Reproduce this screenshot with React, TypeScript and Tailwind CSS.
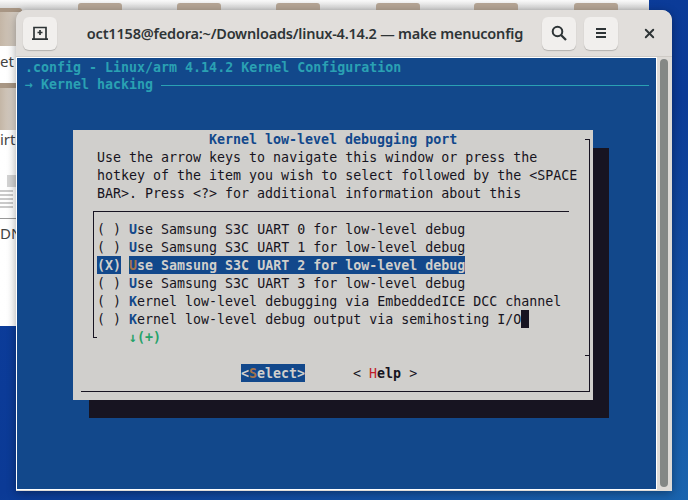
import type { ReactNode } from 'react';
import { X } from 'lucide-react';

const Row = ({ children, className = '' }: { children?: ReactNode; className?: string }) => (
  <div className={`h-[18px] whitespace-pre ${className}`}>{children}</div>
);

const Hot = ({ children }: { children: ReactNode }) => <span className="font-bold text-[#12488b]">{children}</span>;

const items = [
  ['U', 'se Samsung S3C UART 0 for low-level debug'],
  ['U', 'se Samsung S3C UART 1 for low-level debug'],
  ['U', 'se Samsung S3C UART 2 for low-level debug'],
  ['U', 'se Samsung S3C UART 3 for low-level debug'],
  ['K', 'ernel low-level debugging via EmbeddedICE DCC channel'],
  ['K', 'ernel low-level debug output via semihosting I/O'],
];

const folderXs = [78, 177, 276, 376, 474, 574];

function Desktop() {
  return (
    <>
      {/* file manager window behind the terminal */}
      <div className="absolute left-0 top-0 h-[326px] w-[649px] overflow-hidden bg-gradient-to-r from-[#ffffff] to-[#e9e9e9] text-[15px] text-[#3d3d3d]">
        <div className="h-3 w-full bg-gradient-to-b from-[#fafafa] to-[#c9c9c9]" />
        {folderXs.map((x) => (
          <div key={x} className="absolute top-[3px] h-[8px] w-[44px] rounded-t-[3px] bg-[#b5a595]" style={{ left: x }} />
        ))}
        <div className="absolute left-0 top-[8px] h-[38px] w-[22px] rounded-tr-[3px] border-t-[4px] border-[#a89684] bg-gradient-to-r from-[#c4b6a6] to-[#dcd6cf]" />
        <div className="absolute left-0 top-[50px] text-[#444]">et</div>
        <div className="absolute left-0 top-[83px] h-[47px] w-[16px] border-t-[5px] border-[#a89684] bg-gradient-to-r from-[#c4b6a6] to-[#dcd6cf]" />
        <div className="absolute left-0 top-[128px] text-[#444]">irt</div>
        <div className="absolute left-0 top-[175px] h-[38px] w-[16px]">
          <div className="ml-[7px] h-[12px] w-[9px] bg-[#d4d4d4]" />
          <div className="mt-[3px] h-[2px] w-[13px] bg-[#cacaca]" />
          <div className="mt-[2px] h-[2px] w-[13px] bg-[#cacaca]" />
          <div className="mt-[2px] h-[2px] w-[13px] bg-[#cacaca]" />
          <div className="mt-[2px] h-[2px] w-[13px] bg-[#cacaca]" />
          <div className="mt-[2px] h-[2px] w-[13px] bg-[#cacaca]" />
        </div>
        <div className="absolute left-0 top-[218px] h-px w-[16px] bg-[#999]" />
        <div className="absolute left-0 top-[222px] text-[#444]">DN</div>
      </div>
    </>
  );
}

export default function App() {
  return (
    <div className="relative h-[500px] w-[688px] overflow-hidden bg-[linear-gradient(150deg,#0c3fa0,#0b3a96_55%,#1a64ae)]">
      <Desktop />

      {/* terminal window */}
      <div className="absolute left-[16px] top-[10px] flex h-[481px] w-[656px] flex-col overflow-hidden rounded-t-[10px] bg-[#dedbd7] shadow-[0_2px_10px_rgba(0,0,0,0.35)]">
        <header className="flex h-[47px] flex-shrink-0 items-center border-b border-[#cfcbc6] bg-[#e1dedb] pl-[7px] pr-[4px]">
          <button className="flex h-[33px] w-[34px] items-center justify-center rounded-[6px] bg-[#f1efed] shadow-[0_1px_1px_rgba(0,0,0,0.2)]">
            <svg width="16" height="16" viewBox="0 0 16 16" fill="none" stroke="#2e3436" strokeWidth="1.7">
              <path d="M2 14V2.5h12V14" />
              <path d="M0 14.2h16" />
              <path d="M8 5v5M5.5 7.5h5" />
            </svg>
          </button>
          <div className="flex-1 pl-[11px] text-center font-['Noto_Sans',sans-serif] text-[14.5px] font-semibold leading-none tracking-[-0.2px] text-[#2e3436]">
            oct1158@fedora:~/Downloads/linux-4.14.2 — make menuconfig
          </div>
          <div className="flex items-center gap-[8px]">
            <button className="flex h-[33px] w-[34px] items-center justify-center rounded-[6px] bg-[#f1efed] shadow-[0_1px_1px_rgba(0,0,0,0.2)]">
              <svg width="16" height="16" viewBox="0 0 16 16" fill="none" stroke="#2e3436" strokeWidth="2">
                <circle cx="6.5" cy="6.5" r="4.8" />
                <path d="M10 10l5 5" strokeWidth="2.3" />
              </svg>
            </button>
            <button className="flex h-[33px] w-[34px] items-center justify-center rounded-[6px] bg-[#f1efed] shadow-[0_1px_1px_rgba(0,0,0,0.2)]">
              <svg width="16" height="16" viewBox="0 0 16 16" fill="#2e3436">
                <rect x="3" y="3" width="10" height="2" />
                <rect x="3" y="7" width="10" height="2" />
                <rect x="3" y="11" width="10" height="2" />
              </svg>
            </button>
            <button className="ml-[4px] flex h-[33px] w-[38px] items-center justify-center">
              <X size={15} strokeWidth={3} color="#2e3436" />
            </button>
          </div>
        </header>

        <div className="flex flex-1 min-h-0">
          {/* terminal screen */}
          <main className="h-[433px] w-[641px] flex-shrink-0 border border-[#ffffff] bg-[#12488b] font-['DejaVu_Sans_Mono',monospace] text-[13.3px] leading-[20px] text-[#171421]">
            <div className="pl-[8px] text-[#2aa1b3]">
              <Row className="font-bold">.config - Linux/arm 4.14.2 Kernel Configuration</Row>
              <div className="flex h-[18px] items-center font-bold">
                <span className="whitespace-pre">→ Kernel hacking </span>
                <div className="mr-[7px] h-px flex-1 bg-[#2aa1b3]" />
              </div>
            </div>

            <div className="ml-[56px] mt-[36px] h-[270px] w-[520px] bg-[#d0cfcc] pt-[9px] shadow-[16px_18px_0_#171421]">
              <div className="relative ml-[8px] flex h-[253px] w-[509px] flex-col border-b border-r border-[#171421]">
                <div className="absolute right-0 top-0 h-px w-[4px] bg-[#171421]" />
                <div className="absolute right-0 top-[216px] h-px w-[4px] bg-[#171421]" />
                <div className="-mt-[9px] pl-[128px] font-bold text-[#12488b]"><Row>Kernel low-level debugging port</Row></div>
                <div className="pl-[16px]">
                  <Row>Use the arrow keys to navigate this window or press the</Row>
                  <Row>hotkey of the item you wish to select followed by the &lt;SPACE</Row>
                  <Row>BAR&gt;. Press &lt;?&gt; for additional information about this</Row>
                </div>
                <div className="relative ml-[12px] mt-[9px] h-[127px] w-[476px] flex-shrink-0 border-l border-t border-[#171421] pl-[3px] pt-[8px]">
                  {items.map(([hot, rest], i) =>
                    i === 2 ? (
                      <Row key={i} className="font-bold text-[#d0cfcc]">
                        <span className="inline-block h-[18px] bg-[#12488b] align-top">(X)</span>
                        <span className="ml-[8px] inline-block h-[18px] bg-[#12488b] align-top"><span className="text-[#a2734c]">{hot}</span>{rest}</span>
                      </Row>
                    ) : (
                      <Row key={i}>{'( ) '}<Hot>{hot}</Hot>{rest}{i === 5 && <span className="inline-block h-[18px] w-[8px] bg-[#171421] align-top" />}</Row>
                    )
                  )}
                  <Row className="pl-[32px] font-bold text-[#26a269]">↓(+)</Row>
                  <div className="absolute bottom-0 left-0 h-px w-[3px] bg-[#171421]" />
                </div>
                <div className="mt-[26px] flex pl-[160px]">
                  <span className="h-[18px] whitespace-pre bg-[#12488b] font-bold text-[#d0cfcc]">&lt;<span className="text-[#a2734c]">S</span>elect&gt;</span>
                  <span className="ml-[48px] h-[18px] whitespace-pre">&lt; <span className="text-[#c01c28]">H</span><span className="font-bold">elp</span> &gt;</span>
                </div>
              </div>
            </div>
          </main>

          {/* scrollbar */}
          <div className="flex-1 bg-[#dedbd7] pl-[3px] pt-[2px]">
            <div className="h-[428px] w-[8px] rounded-full bg-[#848886]" />
          </div>
        </div>
      </div>
    </div>
  );
}
